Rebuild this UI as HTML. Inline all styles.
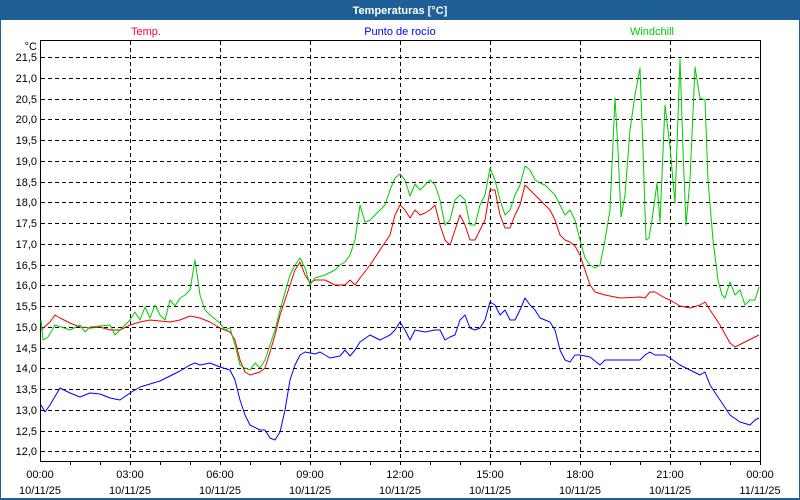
<!DOCTYPE html>
<html><head><meta charset="utf-8"><style>
html,body{margin:0;padding:0;width:800px;height:500px;overflow:hidden;background:#fff;font-family:"Liberation Sans",sans-serif}
</style></head><body>
<svg width="800" height="500" xmlns="http://www.w3.org/2000/svg" style="display:block">
<rect x="0" y="0" width="800" height="500" fill="#1e5f96"/>
<rect x="1" y="20" width="798" height="478" fill="#fff"/>
<text x="400" y="14" fill="#fff" font-size="11" font-weight="bold" text-anchor="middle" font-family="Liberation Sans,sans-serif">Temperaturas [°C]</text>
<g font-size="11" font-family="Liberation Sans,sans-serif" text-anchor="middle">
<text x="146" y="35" fill="#ff0033">Temp.</text>
<text x="400" y="35" fill="#0000ff">Punto de rocío</text>
<text x="652" y="35" fill="#00cc00">Windchill</text>
</g>
<g stroke="#000" stroke-width="1" stroke-dasharray="4,3" fill="none" shape-rendering="crispEdges">
<path d="M41 57.5H760M41 78.5H760M41 99.5H760M41 119.5H760M41 140.5H760M41 161.5H760M41 182.5H760M41 202.5H760M41 223.5H760M41 244.5H760M41 265.5H760M41 285.5H760M41 306.5H760M41 327.5H760M41 348.5H760M41 368.5H760M41 389.5H760M41 410.5H760M41 431.5H760M41 451.5H760"/>
<path d="M130.5 41V461M220.5 41V461M310.5 41V461M400.5 41V461M490.5 41V461M580.5 41V461M670.5 41V461"/>
</g>
<g stroke="#000" fill="none" shape-rendering="crispEdges">
<path d="M40.5 40V462M40 40.5H760.5M760.5 40V462M40 461.5H761"/>
<path d="M70.5 461v4M100.5 461v4M130.5 461v4M160.5 461v4M190.5 461v4M220.5 461v4M250.5 461v4M280.5 461v4M310.5 461v4M340.5 461v4M370.5 461v4M400.5 461v4M430.5 461v4M460.5 461v4M490.5 461v4M520.5 461v4M550.5 461v4M580.5 461v4M610.5 461v4M640.5 461v4M670.5 461v4M700.5 461v4M730.5 461v4M760.5 461v4"/>
</g>
<g font-size="11" fill="#000" text-anchor="end" font-family="Liberation Sans,sans-serif">
<text x="37" y="50">°C</text>
<text x="37" y="61">21,5</text><text x="37" y="82">21,0</text><text x="37" y="103">20,5</text><text x="37" y="123">20,0</text>
<text x="37" y="144">19,5</text><text x="37" y="165">19,0</text><text x="37" y="186">18,5</text><text x="37" y="206">18,0</text>
<text x="37" y="227">17,5</text><text x="37" y="248">17,0</text><text x="37" y="269">16,5</text><text x="37" y="289">16,0</text>
<text x="37" y="310">15,5</text><text x="37" y="331">15,0</text><text x="37" y="352">14,5</text><text x="37" y="372">14,0</text>
<text x="37" y="393">13,5</text><text x="37" y="414">13,0</text><text x="37" y="435">12,5</text><text x="37" y="455">12,0</text>
</g>
<g font-size="11" fill="#000" text-anchor="middle" font-family="Liberation Sans,sans-serif">
<text x="40" y="478">00:00</text><text x="40" y="494">10/11/25</text>
<text x="130" y="478">03:00</text><text x="130" y="494">10/11/25</text>
<text x="220" y="478">06:00</text><text x="220" y="494">10/11/25</text>
<text x="310" y="478">09:00</text><text x="310" y="494">10/11/25</text>
<text x="400" y="478">12:00</text><text x="400" y="494">10/11/25</text>
<text x="490" y="478">15:00</text><text x="490" y="494">10/11/25</text>
<text x="580" y="478">18:00</text><text x="580" y="494">10/11/25</text>
<text x="670" y="478">21:00</text><text x="670" y="494">10/11/25</text>
<text x="760" y="478">00:00</text><text x="760" y="494">11/11/25</text>
</g>
<g fill="none" stroke-width="1" stroke-linejoin="round">
<polyline stroke="#0000ff" points="41,405 45,412 50,405 60,388 70,393 80,397 90,393 100,394 110,398 120,400 130,393 140,387 150,384 160,381 170,376 180,371 190,365 195,363 200,365 210,363 220,367 230,370 235,380 240,400 245,415 250,425 260,430 265,430 270,438 275,440 280,432 285,410 290,380 295,365 300,355 305,352 315,354 320,352 330,358 340,356 345,350 350,356 355,350 360,342 370,335 380,340 390,335 395,330 400,322 405,330 410,340 415,330 425,332 435,330 440,330 445,340 450,337 455,335 460,320 465,315 470,328 475,330 480,328 485,320 490,302 495,305 500,315 505,310 510,320 515,320 520,310 525,298 530,305 535,310 540,318 545,320 550,322 555,330 560,350 565,360 570,362 575,355 580,355 590,357 600,365 605,360 620,360 640,360 645,355 650,352 655,355 665,355 670,358 680,365 690,370 700,375 705,372 710,385 720,400 730,415 740,422 750,425 755,420 759,418"/>
<polyline stroke="#ee0000" points="41,330 50,322 55,315 60,318 70,323 80,327 90,328 100,327 110,330 120,330 130,325 140,322 150,320 170,322 180,320 190,316 200,318 210,322 220,328 230,332 235,340 240,360 245,372 250,375 260,372 265,368 270,352 275,335 280,315 285,300 290,285 295,270 300,262 305,275 310,283 315,280 325,280 335,285 345,285 350,280 355,285 360,278 370,265 380,250 390,235 395,215 400,205 405,210 410,218 415,210 420,215 425,213 430,210 435,205 440,225 445,240 450,245 455,230 460,215 465,225 470,240 475,240 480,230 485,220 490,190 495,190 500,215 505,228 510,228 515,215 520,205 525,185 530,190 535,195 540,200 545,205 550,210 555,220 560,235 565,240 570,242 575,246 580,255 585,270 590,285 595,292 605,295 620,298 640,297 645,298 650,292 655,292 665,298 670,300 680,306 690,308 700,305 705,302 710,310 720,325 730,343 735,347 745,342 759,335"/>
<polyline stroke="#00cc00" points="41,320 43,340 48,337 55,325 70,330 80,325 85,332 90,327 100,326 110,325 115,335 120,330 130,320 135,312 140,320 145,307 150,318 155,305 160,315 165,320 170,300 175,306 180,298 185,295 190,290 195,260 200,295 205,310 210,315 220,323 225,330 230,328 235,345 240,365 245,368 250,370 255,363 260,368 265,360 270,345 275,330 280,310 290,275 295,265 300,258 305,268 310,285 315,278 325,275 335,270 340,265 345,262 350,255 355,240 360,205 365,222 370,220 375,215 380,210 385,205 390,190 395,178 400,174 405,180 410,196 415,184 420,190 425,185 430,180 435,185 440,200 445,225 450,220 455,200 460,195 465,200 470,225 475,225 480,205 485,195 490,168 495,180 500,200 505,215 510,210 515,195 520,185 525,166 530,170 535,180 540,183 545,185 550,190 555,195 560,205 565,215 570,210 575,220 580,240 585,258 590,265 595,268 600,265 605,240 610,210 615,98 618,150 621,217 625,195 630,130 635,95 640,68 643,150 646,240 649,238 652,220 657,183 660,222 665,105 670,147 675,203 680,59 683,150 686,225 690,180 695,67 700,98 705,100 708,180 713,240 718,280 722,295 725,298 730,282 735,295 740,290 745,305 750,300 755,300 759,287"/>
</g>
</svg>
</body></html>
